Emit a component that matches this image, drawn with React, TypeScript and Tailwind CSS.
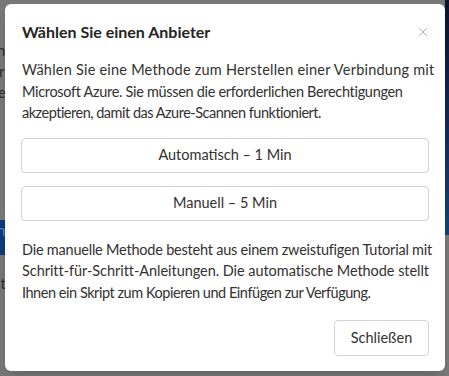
import { X } from 'lucide-react'

const font = { fontFamily: 'Lato, "Liberation Sans", sans-serif' }

function ChoiceButton({ label }: { label: string }) {
  return (
    <button
      type="button"
      className="flex h-[35px] w-full items-center justify-center rounded-[4px] border border-[#d2d2da] bg-white text-[14.5px] text-[#323130]"
    >
      {label}
    </button>
  )
}

export default function App() {
  return (
    <div className="relative h-[376px] w-[449px] overflow-hidden bg-[#787878]" style={font}>
      {/* page behind the backdrop */}
      <div className="flex h-full">
        <div className="flex w-[5px] flex-col text-[15px] leading-[21px] text-[#2c2c2c]">
          <span className="mt-[40px] -ml-[3px]">n</span>
          <span className="-ml-[1px]">r</span>
          <span className="-ml-[2px]">e</span>
          <div className="mt-[117px] h-[35px] w-[5px] bg-[#103a7c] text-[#5f86c6]">
            <span className="-ml-[3px]">n</span>
          </div>
          <span className="mt-[18px] -ml-[6px]">st</span>
        </div>
        <div className="flex-1" />
        <div className="h-[235px] w-[4px] bg-gradient-to-b from-[#0a1230] to-[#13427e]" />
      </div>

      {/* modal */}
      <div className="absolute left-[5px] top-[4px] flex w-[440px] flex-col rounded-[6px] bg-white px-4 pb-[15px] pt-4 text-[#323130] shadow-lg">
        <div className="flex h-[24px] items-center justify-between">
          <h2 className="pl-[1px] text-[16px] font-bold text-[#252423]">Wählen Sie einen Anbieter</h2>
          <X size={14} strokeWidth={1.5} className="mr-[-1px] text-[#a6a6ae]" />
        </div>
        <p className="mt-[15px] whitespace-nowrap pl-[1px] text-[14.5px] leading-[21.5px]">
          <span className="block tracking-[0.22px]">Wählen Sie eine Methode zum Herstellen einer Verbindung mit</span>
          <span className="block tracking-[-0.32px]">Microsoft Azure. Sie müssen die erforderlichen Berechtigungen</span>
          <span className="block tracking-[-0.5px]">akzeptieren, damit das Azure-Scannen funktioniert.</span>
        </p>
        <div className="mt-[14px] flex flex-col gap-[13px]">
          <ChoiceButton label="Automatisch – 1 Min" />
          <ChoiceButton label="Manuell – 5 Min" />
        </div>
        <p className="mt-[18px] whitespace-nowrap pl-[1px] text-[14.5px] leading-[21.5px]">
          <span className="block tracking-[-0.22px]">Die manuelle Methode besteht aus einem zweistufigen Tutorial mit</span>
          <span className="block tracking-[-0.05px]">Schritt-für-Schritt-Anleitungen. Die automatische Methode stellt</span>
          <span className="block tracking-[-0.46px]">Ihnen ein Skript zum Kopieren und Einfügen zur Verfügung.</span>
        </p>
        <div className="mt-[17px] flex justify-end">
          <button
            type="button"
            className="h-[36px] w-[95px] rounded-[4px] border border-[#d2d2da] bg-white text-[14.5px] text-[#323130]"
          >
            Schließen
          </button>
        </div>
      </div>
    </div>
  )
}
